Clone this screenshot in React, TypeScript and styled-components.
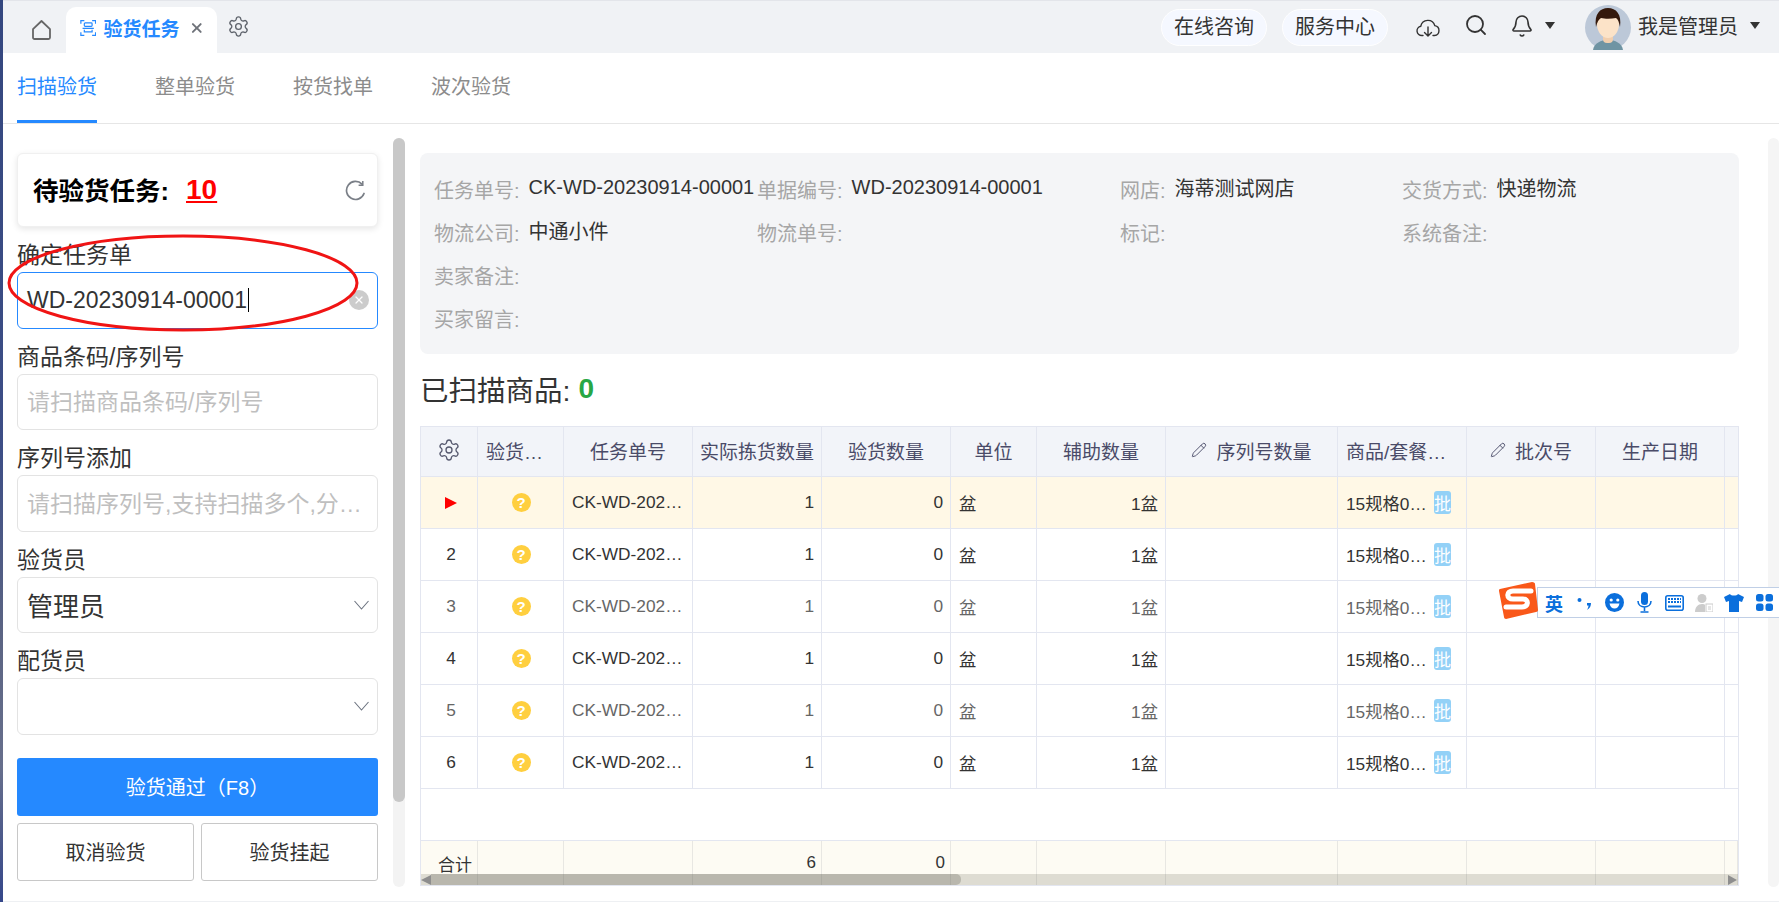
import { Bell, Pencil, Search, Settings, X } from "lucide-react";
import styled, { createGlobalStyle } from "styled-components";

const COLUMNS = "57px 86px 129px 129px 129px 86px 129px 172px 129px 129px 129px 13px";
const LINE = "#e3e6f0";

const rows = [
  { id: 1, active: true },
  { id: 2 },
  { id: 3, dim: true },
  { id: 4 },
  { id: 5, dim: true },
  { id: 6 },
];

const GlobalStyle = createGlobalStyle`
  html, body {
    margin: 0;
    padding: 0;
    background: #fff;
  }
  * {
    box-sizing: border-box;
  }
  body {
    font-family: "Liberation Sans", "Noto Sans CJK SC", sans-serif;
    color: #333;
  }
`;

function HomeIcon() {
  return (
    <svg width="19" height="20" viewBox="0 0 19 20" fill="none" stroke="#666" strokeWidth="1.8">
      <path d="M1 9.2 9.5 1 18 9.2V17.5a1.5 1.5 0 0 1-1.5 1.5h-14A1.5 1.5 0 0 1 1 17.5z" strokeLinejoin="round" />
    </svg>
  );
}

function ScanIcon() {
  return (
    <svg width="19" height="20" viewBox="0 0 19 20" fill="none" stroke="#2589ff" strokeWidth="1.4">
      <path d="M1 5V1.5h4M14 1.5h4V5M1 15v3.5h4M14 18.5h4V15" />
      <rect x="5" y="4" width="9" height="4" rx="1" />
      <path d="M3 10.5h13M5 12v2.5h9V12" />
    </svg>
  );
}

function RefreshIcon() {
  return (
    <svg width="21" height="21" viewBox="0 0 21 21" fill="none" stroke="#7a7f87" strokeWidth="1.7">
      <path d="M19 13.5A9 9 0 1 1 17 4.2" strokeLinecap="round" />
      <path d="M17.8 1v4.2h-4.2" stroke="#7a7f87" strokeWidth="1.5" />
    </svg>
  );
}

function Chevron() {
  return (
    <svg width="15" height="10" viewBox="0 0 15 10" fill="none" stroke="#6d7480" strokeWidth="1.1">
      <path d="M.5 1 7.5 9 14.5 1" />
    </svg>
  );
}

function CloudIcon() {
  return (
    <svg width="24" height="20" viewBox="0 0 24 20" fill="none" stroke="#333" strokeWidth="1.4">
      <path d="M7 18.500H6a4.700 4.700 0 0 1-1.200-9.300 7.200 7.200 0 0 1 14-.600A5 5 0 0 1 18.500 18.500H17" strokeLinecap="round" />
      <path d="M12 10v9M8.500 15.500 12 19l3.500-3.500" strokeLinecap="round" />
    </svg>
  );
}

function Avatar() {
  return (
    <svg width="46" height="45" viewBox="0 0 46 45">
      <ellipse cx="23" cy="22.5" rx="23" ry="22.5" fill="#bcc8d8" />
      <path d="M8 45c1-7 8-10 15-10s14 3 15 10z" fill="#6f94a3" />
      <rect x="18" y="28" width="10" height="10" rx="4" fill="#f2cfae" />
      <ellipse cx="23" cy="19" rx="11" ry="14" fill="#fce3c8" />
      <path d="M11 22C9 9 15 3 23 3s14 6 12 19c-1-5-2-8-4-9-5 1-11 1-15 0-2 1-4 4-5 9z" fill="#34190c" />
    </svg>
  );
}

function SogouLogo() {
  return (
    <svg width="40" height="38" viewBox="0 0 40 38">
      <path d="M2 8 34 1c2 0 3 1 3 2l3 26c0 1-1 2-2 2L8 38c-1 0-2-1-2-2L1 10c0-1 0-2 1-2z" fill="#f9581a" />
      <path
        d="M33 10H15c-7 0-7 8 0 8h10c6 0 6 8-1 8H8"
        fill="none"
        stroke="#fff"
        strokeWidth="5"
        strokeLinecap="round"
      />
    </svg>
  );
}

function ImeIcons() {
  return (
    <>
      <ImeSlot>
        <ImeText>英</ImeText>
      </ImeSlot>
      <ImeSlot>
        <svg width="16" height="16" viewBox="0 0 16 16" fill="#0b6fdc">
          <circle cx="3.5" cy="5" r="2" />
          <path d="M11 8h4c0 3-1 5-4 7 1-2 1.500-3 1.500-4.500H11z" />
        </svg>
      </ImeSlot>
      <ImeSlot>
        <svg width="19" height="19" viewBox="0 0 19 19">
          <circle cx="9.500" cy="9.500" r="9.500" fill="#0b6fdc" />
          <circle cx="6.200" cy="7" r="1.600" fill="#fff" />
          <circle cx="12.800" cy="7" r="1.600" fill="#fff" />
          <path d="M4.500 10.500h10c-.5 3-2.500 5-5 5s-4.500-2-5-5z" fill="#fff" />
        </svg>
      </ImeSlot>
      <ImeSlot>
        <svg width="15" height="21" viewBox="0 0 15 21" fill="none" stroke="#0b6fdc" strokeWidth="1.6">
          <rect x="4" y="0" width="7" height="13" rx="3.500" fill="#0b6fdc" stroke="none" />
          <path d="M1 9c0 8 13 8 13 0M7.500 15v4M3.500 20h8" />
        </svg>
      </ImeSlot>
      <ImeSlot>
        <svg width="19" height="16" viewBox="0 0 19 16">
          <rect x=".8" y=".8" width="17.400" height="14.400" rx="2" fill="#fff" stroke="#0b6fdc" strokeWidth="1.600" />
          <path d="M3 4h13M3 7h13" stroke="#0b6fdc" strokeWidth="2" strokeDasharray="2 1" />
          <path d="M3 11.500h13" stroke="#0b6fdc" strokeWidth="2" />
        </svg>
      </ImeSlot>
      <ImeSlot>
        <svg width="18" height="18" viewBox="0 0 18 18" fill="#ccc">
          <circle cx="7" cy="4.500" r="4.500" />
          <path d="M0 18c0-5 3-8 7-8 1.500 0 2.500.3 3 .8V18z" />
          <rect x="11" y="10" width="7" height="8" fill="#fff" stroke="#ccc" />
          <path d="M13 13h3M13 15h3" stroke="#ccc" />
        </svg>
      </ImeSlot>
      <ImeSlot>
        <svg width="20" height="18" viewBox="0 0 20 18" fill="#0b6fdc">
          <path d="M6 0c1 2 7 2 8 0l6 3-2 5-3-1v11H5V7L2 8 0 3z" />
        </svg>
      </ImeSlot>
      <ImeSlot>
        <svg width="17" height="17" viewBox="0 0 17 17" fill="#0b6fdc">
          <rect x="0" y="0" width="7.500" height="7.500" rx="2.500" />
          <rect x="9.500" y="0" width="7.500" height="7.500" rx="2.500" />
          <rect x="0" y="9.500" width="7.500" height="7.500" rx="2.500" />
          <rect x="9.500" y="9.500" width="7.500" height="7.500" rx="2.500" />
        </svg>
      </ImeSlot>
    </>
  );
}

function TableRow({ id, active, dim }: { id: number; active?: boolean; dim?: boolean }) {
  return (
    <Row $active={active} $dim={dim}>
      <IndexCell>{active ? <RowArrow /> : id}</IndexCell>
      <Cell $align="center">
        <Question>?</Question>
      </Cell>
      <Cell>CK-WD-202…</Cell>
      <Cell $align="flex-end">1</Cell>
      <Cell $align="flex-end">0</Cell>
      <Cell>盆</Cell>
      <Cell $align="flex-end">1盆</Cell>
      <Cell />
      <Cell>
        15规格0…
        <BatchBadge>批</BatchBadge>
      </Cell>
      <Cell />
      <Cell />
      <Cell />
    </Row>
  );
}

export default function App() {
  return (
    <Page>
      <GlobalStyle />
      <DesktopEdge />
      <Window>
        <TopBar>
          <HomeSlot>
            <HomeIcon />
          </HomeSlot>
          <ActiveTab>
            <ScanIcon />
            <TabTitle>验货任务</TabTitle>
            <X size={18} strokeWidth={3} color="#6f737a" />
          </ActiveTab>
          <GearSlot>
            <Settings size={23} strokeWidth={1.4} color="#5e636b" />
          </GearSlot>
          <TopActions>
            <Pill>在线咨询</Pill>
            <Pill>服务中心</Pill>
            <ActionSlot $left={28}>
              <CloudIcon />
            </ActionSlot>
            <ActionSlot $left={24} $up={4}>
              <Search size={24} strokeWidth={1.8} color="#333" />
            </ActionSlot>
            <ActionSlot $left={22} $up={3}>
              <Bell size={24} strokeWidth={1.6} color="#333" />
            </ActionSlot>
            <ActionSlot $left={11} $up={4}>
              <Caret />
            </ActionSlot>
            <ActionSlot $left={30}>
              <Avatar />
            </ActionSlot>
            <UserName>我是管理员</UserName>
            <ActionSlot $left={12} $up={4}>
              <Caret />
            </ActionSlot>
          </TopActions>
        </TopBar>

        <SubNav>
          <SubTab $active>扫描验货</SubTab>
          <SubTab>整单验货</SubTab>
          <SubTab>按货找单</SubTab>
          <SubTab>波次验货</SubTab>
        </SubNav>

        <Body>
          <Sidebar>
            <TaskCard>
              <TaskTitle>待验货任务:</TaskTitle>
              <TaskCount>10</TaskCount>
              <RefreshSlot>
                <RefreshIcon />
              </RefreshSlot>
            </TaskCard>

            <Fields>
              <Field>
                <FieldLabel>确定任务单</FieldLabel>
                <FieldBox $focused>
                  <FieldValue>WD-20230914-00001</FieldValue>
                  <TextCaret />
                  <ClearButton>
                    <X size={12} strokeWidth={2.4} color="#fff" />
                  </ClearButton>
                </FieldBox>
              </Field>
              <Field>
                <FieldLabel>商品条码/序列号</FieldLabel>
                <FieldBox>
                  <Placeholder>请扫描商品条码/序列号</Placeholder>
                </FieldBox>
              </Field>
              <Field>
                <FieldLabel>序列号添加</FieldLabel>
                <FieldBox>
                  <Placeholder>请扫描序列号,支持扫描多个,分…</Placeholder>
                </FieldBox>
              </Field>
              <Field>
                <FieldLabel>验货员</FieldLabel>
                <FieldBox>
                  <SelectValue>管理员</SelectValue>
                  <ChevronSlot>
                    <Chevron />
                  </ChevronSlot>
                </FieldBox>
              </Field>
              <Field>
                <FieldLabel>配货员</FieldLabel>
                <FieldBox>
                  <ChevronSlot>
                    <Chevron />
                  </ChevronSlot>
                </FieldBox>
              </Field>
            </Fields>

            <PrimaryButton>验货通过（F8）</PrimaryButton>
            <ButtonRow>
              <OutlineButton>取消验货</OutlineButton>
              <OutlineButton>验货挂起</OutlineButton>
            </ButtonRow>

            <Annotation viewBox="0 0 352 98" width="352" height="98" fill="none">
              <ellipse cx="176" cy="49" rx="174" ry="47" stroke="#f01414" strokeWidth="3" />
            </Annotation>
          </Sidebar>

          <SideScroll>
            <SideThumb />
          </SideScroll>

          <Main>
            <InfoPanel>
              <InfoItem>
                <InfoLabel>任务单号:</InfoLabel>
                <InfoValue>CK-WD-20230914-00001</InfoValue>
              </InfoItem>
              <InfoItem>
                <InfoLabel>单据编号:</InfoLabel>
                <InfoValue>WD-20230914-00001</InfoValue>
              </InfoItem>
              <InfoItem>
                <InfoLabel>网店:</InfoLabel>
                <InfoValue>海蒂测试网店</InfoValue>
              </InfoItem>
              <InfoItem>
                <InfoLabel>交货方式:</InfoLabel>
                <InfoValue>快递物流</InfoValue>
              </InfoItem>
              <InfoItem>
                <InfoLabel>物流公司:</InfoLabel>
                <InfoValue>中通小件</InfoValue>
              </InfoItem>
              <InfoItem>
                <InfoLabel>物流单号:</InfoLabel>
              </InfoItem>
              <InfoItem>
                <InfoLabel>标记:</InfoLabel>
              </InfoItem>
              <InfoItem>
                <InfoLabel>系统备注:</InfoLabel>
              </InfoItem>
              <InfoItem $full>
                <InfoLabel>卖家备注:</InfoLabel>
              </InfoItem>
              <InfoItem $full>
                <InfoLabel>买家留言:</InfoLabel>
              </InfoItem>
            </InfoPanel>

            <Heading>
              <HeadingText>已扫描商品:</HeadingText>
              <HeadingCount>0</HeadingCount>
            </Heading>

            <Table>
              <HeaderRow>
                <HeaderCell>
                  <Settings size={24} strokeWidth={1.3} color="#55586e" />
                </HeaderCell>
                <HeaderCell $start>验货…</HeaderCell>
                <HeaderCell>任务单号</HeaderCell>
                <HeaderCell>实际拣货数量</HeaderCell>
                <HeaderCell>验货数量</HeaderCell>
                <HeaderCell>单位</HeaderCell>
                <HeaderCell>辅助数量</HeaderCell>
                <HeaderCell>
                  <Pencil size={16} strokeWidth={1.4} />
                  序列号数量
                </HeaderCell>
                <HeaderCell $start>商品/套餐…</HeaderCell>
                <HeaderCell>
                  <Pencil size={16} strokeWidth={1.4} />
                  批次号
                </HeaderCell>
                <HeaderCell>生产日期</HeaderCell>
                <HeaderCell />
              </HeaderRow>
              {rows.map((row) => (
                <TableRow key={row.id} {...row} />
              ))}
              <EmptyRow />
              <FooterRow>
                <FooterTotal>合计</FooterTotal>
                <FooterCell />
                <FooterCell />
                <FooterCell $align="flex-end">6</FooterCell>
                <FooterCell $align="flex-end">0</FooterCell>
                <FooterCell />
                <FooterCell />
                <FooterCell />
                <FooterCell />
                <FooterCell />
                <FooterCell />
                <FooterCell />
                <TableScroll>
                  <ScrollArrow $side="left" />
                  <TableThumb />
                  <ScrollArrow $side="right" />
                </TableScroll>
              </FooterRow>
            </Table>
          </Main>

          <PageScroll />
        </Body>
      </Window>

      <ImeBar>
        <ImeLogo>
          <SogouLogo />
        </ImeLogo>
        <ImeIcons />
      </ImeBar>
    </Page>
  );
}

const Page = styled.div`
  position: relative;
  display: flex;
  width: 1779px;
  height: 902px;
  overflow: hidden;
  background: #fff;
`;

const DesktopEdge = styled.div`
  flex: 0 0 3px;
  background: linear-gradient(180deg, #34477f 0%, #3d4e86 50%, #5b6483 70%, #676f8c 85%, #35478a 100%);
`;

const Window = styled.div`
  flex: 1;
  min-width: 0;
  display: flex;
  flex-direction: column;
  border-bottom: 1px solid #eef0f3;
`;

const TopBar = styled.header`
  display: flex;
  align-items: center;
  flex: 0 0 53px;
  padding-left: 29px;
  background: #f0f2f5;
  border-top: 1px solid #e3e5ea;
`;

const HomeSlot = styled.div`
  display: flex;
  width: 19px;
  margin-top: 6px;
`;

const ActiveTab = styled.div`
  display: flex;
  align-items: center;
  align-self: flex-end;
  width: 151px;
  height: 46px;
  margin-left: 15px;
  padding: 0 12px 5px 14px;
  background: #fff;
  border-radius: 10px 10px 0 0;
`;

const TabTitle = styled.span`
  margin: 0 10px 0 7px;
  font-size: 19px;
  font-weight: 700;
  color: #2589ff;
  white-space: nowrap;
`;

const GearSlot = styled.div`
  display: flex;
  margin: 0 0 2px 10px;
`;

const TopActions = styled.div`
  display: flex;
  align-items: center;
  gap: 0;
  margin-left: auto;
  padding-right: 19px;
`;

const Pill = styled.div`
  display: flex;
  align-items: center;
  justify-content: center;
  width: 106px;
  height: 37px;
  margin-right: 15px;
  padding-bottom: 3px;
  font-size: 20px;
  color: #333;
  background: #f5f8ff;
  border: 1px solid #fff;
  border-radius: 19px;

  & + & {
    margin-right: 0;
  }
`;

const ActionSlot = styled.div<{ $left: number; $up?: number }>`
  display: flex;
  align-items: center;
  margin-left: ${(p) => p.$left}px;
  margin-bottom: ${(p) => p.$up || 0}px;
`;

const Caret = styled.span`
  width: 0;
  height: 0;
  border-left: 5px solid transparent;
  border-right: 5px solid transparent;
  border-top: 7px solid #333;
`;

const UserName = styled.span`
  margin-left: 7px;
  padding-bottom: 4px;
  font-size: 20px;
  color: #333;
  white-space: nowrap;
`;

const SubNav = styled.nav`
  display: flex;
  flex: 0 0 71px;
  gap: 58px;
  padding-left: 14px;
  border-bottom: 1px solid #e6e6e6;
`;

const SubTab = styled.div<{ $active?: boolean }>`
  display: flex;
  align-items: center;
  height: 70px;
  padding-bottom: 2px;
  font-size: 20px;
  color: ${(p) => (p.$active ? "#2589ff" : "#8c8c8c")};
  border-bottom: 3px solid ${(p) => (p.$active ? "#2589ff" : "transparent")};
`;

const Body = styled.main`
  flex: 1;
  min-height: 0;
  display: flex;
`;

const Sidebar = styled.aside`
  position: relative;
  flex: 0 0 361px;
  margin-left: 14px;
  padding-top: 29px;
`;

const TaskCard = styled.div`
  display: flex;
  align-items: center;
  height: 74px;
  margin-bottom: 15px;
  padding: 0 11px 0 15px;
  background: #fff;
  border: 1px solid #f0f0f0;
  border-radius: 6px;
  box-shadow: 0 2px 6px rgba(0, 0, 0, 0.1);
`;

const TaskTitle = styled.span`
  padding-bottom: 4px;
  font-size: 25.5px;
  font-weight: 700;
  color: #000;
  white-space: nowrap;
`;

const TaskCount = styled.span`
  margin-left: 17px;
  font-size: 28px;
  font-weight: 700;
  color: #f00;
  text-decoration: underline;
`;

const RefreshSlot = styled.div`
  display: flex;
  margin-left: auto;
`;

const Fields = styled.div`
  display: flex;
  flex-direction: column;
  gap: 15px;
`;

const Field = styled.div`
  display: flex;
  flex-direction: column;
`;

const FieldLabel = styled.label`
  height: 30px;
  font-size: 23px;
  line-height: 26px;
  color: #333;
  white-space: nowrap;
`;

const FieldBox = styled.div<{ $focused?: boolean }>`
  display: flex;
  align-items: center;
  height: 56.5px;
  padding: 0 8px 0 9px;
  background: #fff;
  border: 1px solid ${(p) => (p.$focused ? "#2589ff" : "#e3e3e3")};
  border-radius: 6px;
`;

const FieldValue = styled.span`
  font-size: 23px;
  color: #333;
  white-space: nowrap;
`;

const TextCaret = styled.span`
  width: 1px;
  height: 24px;
  margin-left: 1px;
  background: #000;
`;

const ClearButton = styled.span`
  display: flex;
  align-items: center;
  justify-content: center;
  width: 20px;
  height: 20px;
  margin-left: auto;
  background: #ccc;
  border-radius: 50%;
`;

const Placeholder = styled.span`
  padding-bottom: 3px;
  font-size: 23px;
  color: #bfbfbf;
  white-space: nowrap;
`;

const SelectValue = styled.span`
  padding-bottom: 1px;
  font-size: 26px;
  color: #333;
`;

const ChevronSlot = styled.span`
  display: flex;
  margin-left: auto;
`;

const PrimaryButton = styled.button`
  display: block;
  width: 100%;
  height: 58px;
  margin-top: 23px;
  font: inherit;
  font-size: 20px;
  color: #fff;
  background: #2589ff;
  border: 0;
  border-radius: 3px;
`;

const ButtonRow = styled.div`
  display: grid;
  grid-template-columns: 1fr 1fr;
  gap: 7px;
  margin-top: 7px;
`;

const OutlineButton = styled.button`
  height: 58px;
  font: inherit;
  font-size: 20px;
  color: #333;
  background: #fff;
  border: 1px solid #c8c8c8;
  border-radius: 3px;
`;

const Annotation = styled.svg`
  position: absolute;
  top: 110px;
  left: -10px;
  pointer-events: none;
`;

const SideScroll = styled.div`
  flex: 0 0 12px;
  height: 749px;
  margin: 14px 0 0 15px;
  background: #f3f3f3;
  border-radius: 6px;
`;

const SideThumb = styled.div`
  height: 664px;
  background: #c8c8c8;
  border-radius: 6px;
`;

const Main = styled.section`
  flex: 0 0 1319px;
  margin-left: 15px;
  padding-top: 29px;
`;

const InfoPanel = styled.div`
  display: grid;
  grid-template-columns: 323px 363px 282px 1fr;
  grid-auto-rows: 43px;
  height: 201px;
  padding: 15px 0 0 14px;
  background: #f4f5f7;
  border-radius: 8px;
`;

const InfoItem = styled.div<{ $full?: boolean }>`
  display: flex;
  align-items: center;
  gap: 9px;
  grid-column: ${(p) => (p.$full ? "1 / -1" : "auto")};
  font-size: 20px;
  white-space: nowrap;
`;

const InfoLabel = styled.span`
  color: #a6a6a6;
`;

const InfoValue = styled.span`
  padding-bottom: 5px;
  color: #333;
`;

const Heading = styled.h2`
  display: flex;
  align-items: center;
  height: 72px;
  margin: 0;
  font-weight: 400;
`;

const HeadingText = styled.span`
  padding-bottom: 3px;
  font-size: 28.500px;
  color: #333;
`;

const HeadingCount = styled.span`
  margin-left: 8px;
  padding-bottom: 2px;
  font-size: 28px;
  font-weight: 700;
  color: #28a745;
`;

const Table = styled.div`
  height: 460px;
  border: 1px solid ${LINE};
`;

const HeaderRow = styled.div`
  display: grid;
  grid-template-columns: ${COLUMNS};
  height: 50px;
  background: #f2f4f9;
  border-bottom: 1px solid ${LINE};
`;

const HeaderCell = styled.div<{ $start?: boolean }>`
  display: flex;
  align-items: center;
  justify-content: ${(p) => (p.$start ? "flex-start" : "center")};
  gap: 9px;
  padding: 0 0 3px ${(p) => (p.$start ? "8px" : "0")};
  font-size: 19px;
  color: #4a4b68;
  white-space: nowrap;
  border-right: 1px solid ${LINE};

  &:last-child {
    border-right: 0;
  }
`;

const Row = styled.div<{ $active?: boolean; $dim?: boolean }>`
  display: grid;
  grid-template-columns: ${COLUMNS};
  height: 52px;
  font-size: 17.300px;
  color: ${(p) => (p.$dim ? "#666" : "#333")};
  background: ${(p) => (p.$active ? "#fff8e6" : "#fff")};
  border-bottom: 1px solid ${LINE};
`;

const Cell = styled.div<{ $align?: string }>`
  display: flex;
  align-items: center;
  justify-content: ${(p) => p.$align || "flex-start"};
  padding: 0 7px 0 8px;
  white-space: nowrap;
  border-right: 1px solid ${LINE};

  &:last-child {
    border-right: 0;
  }
`;

const IndexCell = styled(Cell)`
  justify-content: center;
  padding: 0 0 0 4px;
`;

const RowArrow = styled.span`
  width: 0;
  height: 0;
  border-left: 12px solid #f00;
  border-top: 6px solid transparent;
  border-bottom: 6px solid transparent;
`;

const Question = styled.span`
  display: flex;
  align-items: center;
  justify-content: center;
  width: 19px;
  height: 19px;
  font-size: 15px;
  font-weight: 700;
  line-height: 1;
  color: #fff;
  background: #ffcf3f;
  border-radius: 50%;
`;

const BatchBadge = styled.span`
  display: flex;
  align-items: center;
  justify-content: center;
  width: 17px;
  height: 23px;
  margin: 0 8px 0 auto;
  overflow: hidden;
  font-size: 17px;
  color: #fff;
  background: #93d1f7;
  border-radius: 3px;
`;

const EmptyRow = styled.div`
  height: 52px;
  border-bottom: 1px solid ${LINE};
`;

const FooterRow = styled.div`
  position: relative;
  display: grid;
  grid-template-columns: ${COLUMNS};
  height: 44px;
  font-size: 17px;
  color: #333;
  background: #fdfbf3;
`;

const FooterCell = styled.div<{ $align?: string }>`
  display: flex;
  align-items: center;
  justify-content: ${(p) => p.$align || "flex-start"};
  padding: 0 5px 0 0;
  border-right: 1px solid #e8e7e2;

  &:last-of-type {
    border-right: 0;
  }
`;

const FooterTotal = styled(FooterCell)`
  justify-content: center;
  padding: 0 0 0 12px;
`;

const TableScroll = styled.div`
  position: absolute;
  right: 0;
  bottom: 0;
  left: 0;
  display: flex;
  align-items: center;
  height: 11px;
  background: rgba(100, 100, 80, 0.2);
`;

const TableThumb = styled.div`
  width: 530px;
  height: 100%;
  background: rgba(90, 90, 80, 0.28);
  border-radius: 0 5px 5px 0;
`;

const ScrollArrow = styled.span<{ $side: "left" | "right" }>`
  width: 0;
  height: 0;
  border-top: 5.500px solid transparent;
  border-bottom: 5.500px solid transparent;
  ${(p) =>
    p.$side === "left"
      ? "border-right: 10px solid #8e8e8e;"
      : "margin-left: auto; margin-right: 1px; border-left: 9px solid #8e8e8e;"}
`;

const PageScroll = styled.div`
  flex: 0 0 11px;
  height: 749px;
  margin: 14px 0 0 29px;
  background: #f5f5f5;
  border-radius: 6px;
`;

const ImeBar = styled.div`
  position: absolute;
  top: 587px;
  right: 0;
  display: flex;
  align-items: center;
  width: 242px;
  height: 31px;
  padding-left: 1px;
  background: #fff;
  border: 1px solid #c0cfe6;
  border-right: 0;
`;

const ImeLogo = styled.div`
  position: absolute;
  top: -7px;
  left: -40px;
  display: flex;
`;

const ImeSlot = styled.div`
  display: flex;
  align-items: center;
  justify-content: center;
  flex: 0 0 30px;
`;

const ImeText = styled.span`
  font-size: 18px;
  font-weight: 700;
  color: #0b6fdc;
`;
